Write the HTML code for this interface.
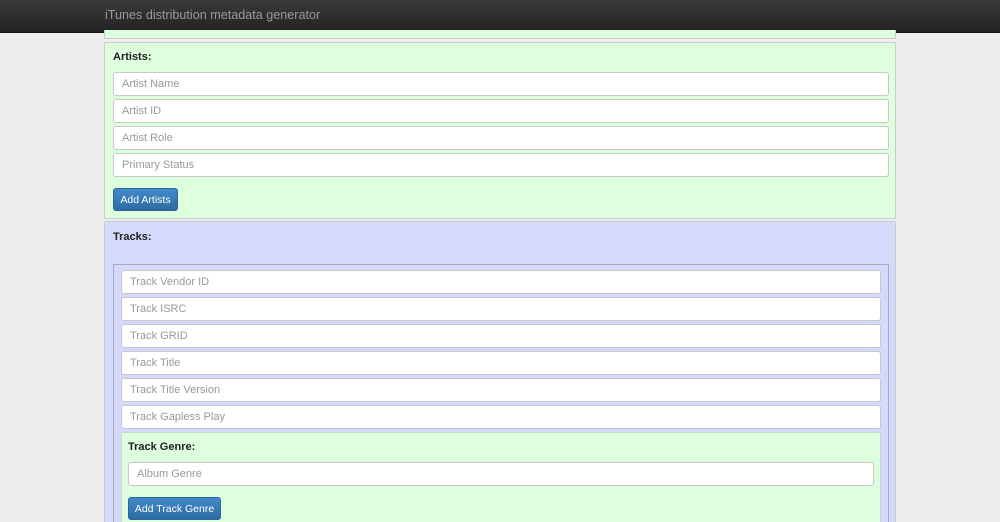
<!DOCTYPE html>
<html style="overflow:hidden;height:522px"><head><style>
body{margin:0;background:#eee;font-family:"Liberation Sans",sans-serif;font-size:11px;width:1000px;height:522px;overflow:hidden;position:relative}
.nav{position:absolute;left:0;top:0;width:1000px;height:32px;background:linear-gradient(#3a3a3a,#222);border-bottom:1px solid #111}
.nav span{position:absolute;left:105px;top:8px;font-size:12.6px;color:#999}
.box{position:absolute;box-sizing:border-box;border:1px solid #ccc}
.g{background:#dfd}
.b{background:#d5d9fc}
.in{position:absolute;box-sizing:border-box;height:24px;background:#fff;border:1px solid #c8c8c8;border-radius:3px;color:#999;padding:5px 8px;font-size:11px}
.lab{position:absolute;font-weight:bold;color:#222;font-size:11px}
.btn{position:absolute;box-sizing:border-box;height:23px;background:linear-gradient(#428bca,#2d6ca2);border:1px solid #2b669a;border-radius:3px;color:#fff;padding:5px 0;text-align:center;font-size:10.5px;white-space:nowrap}
</style></head><body>
<div class="nav"><span>iTunes distribution metadata generator</span></div>
<div class="box g" style="left:104px;top:30px;width:792px;height:9px;border-top:none"></div>
<div class="box g" style="left:104px;top:42px;width:792px;height:177px"></div>
<div class="lab" style="left:113px;top:51px">Artists:</div>
<div class="in" style="left:113px;top:72px;width:776px">Artist Name</div>
<div class="in" style="left:113px;top:99px;width:776px">Artist ID</div>
<div class="in" style="left:113px;top:126px;width:776px">Artist Role</div>
<div class="in" style="left:113px;top:153px;width:776px">Primary Status</div>
<div class="btn" style="left:113px;top:188px;width:65px">Add Artists</div>
<div class="box b" style="left:104px;top:221px;width:792px;height:310px"></div>
<div class="lab" style="left:113px;top:231px">Tracks:</div>
<div class="box" style="left:113px;top:264px;width:776px;height:270px;border-color:#aab"></div>
<div class="in" style="left:121px;top:270px;width:760px">Track Vendor ID</div>
<div class="in" style="left:121px;top:297px;width:760px">Track ISRC</div>
<div class="in" style="left:121px;top:324px;width:760px">Track GRID</div>
<div class="in" style="left:121px;top:351px;width:760px">Track Title</div>
<div class="in" style="left:121px;top:378px;width:760px">Track Title Version</div>
<div class="in" style="left:121px;top:405px;width:760px">Track Gapless Play</div>
<div class="box g" style="left:121px;top:432px;width:760px;height:100px;border-color:#c8d8c8"></div>
<div class="lab" style="left:128px;top:441px">Track Genre:</div>
<div class="in" style="left:128px;top:462px;width:746px">Album Genre</div>
<div class="btn" style="left:128px;top:497px;width:93px">Add Track Genre</div>
</body></html>
